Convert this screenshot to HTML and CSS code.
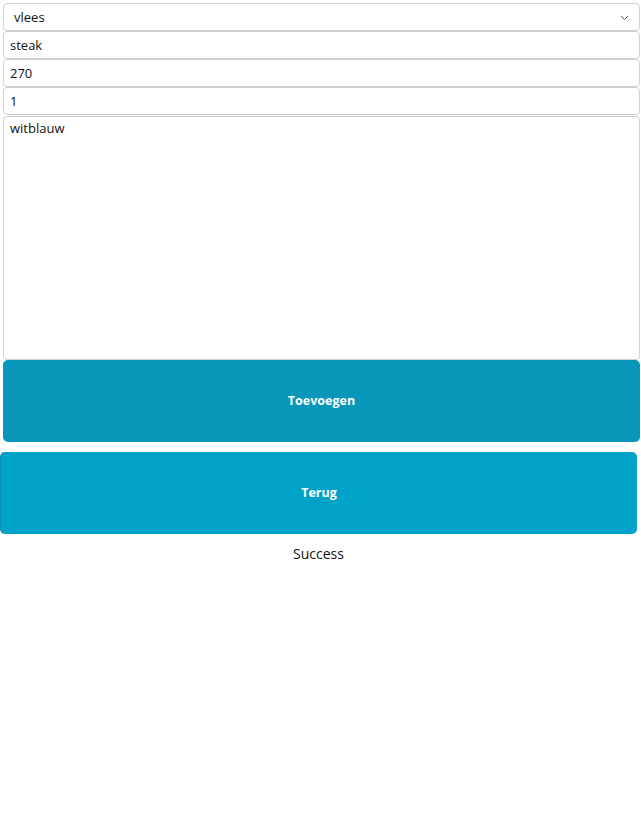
FILE: index.html
```html
<!DOCTYPE html>
<html>
<head>
<meta charset="utf-8">
<link rel="stylesheet" href="styles.css">
</head>
<body>
<div class="page">
  <form class="form">
    <div class="select">
      <span class="select-value">vlees</span>
      <svg class="chevron" width="9" height="6" viewBox="0 0 9 6"><path d="M1 1l3.5 3.5L8 1" fill="none" stroke="#555" stroke-width="1"/></svg>
    </div>
    <input class="field" type="text" value="steak">
    <input class="field" type="text" value="270">
    <input class="field" type="text" value="1">
    <textarea class="area">witblauw</textarea>
    <button type="button" class="btn btn-add">Toevoegen</button>
  </form>
  <button type="button" class="btn btn-back">Terug</button>
  <p class="status">Success</p>
</div>
</body>
</html>
```
FILE: styles.css
```css
html, body { margin: 0; padding: 0; background: #fff; }
body { font-family: "Open Sans", "Noto Sans", sans-serif; color: #111; }
.page { display: flex; flex-direction: column; width: 641px; }
.form { display: flex; flex-direction: column; padding: 3px 1px 0 3px; }
.select, .field, .area {
  box-sizing: border-box;
  width: 637px;
  border: 1px solid #d0d0d0;
  border-radius: 4px;
  background: #fff;
  font-family: inherit;
  font-size: 13px;
  color: #111;
  margin: 0;
}
.select { height: 28px; display: flex; align-items: center; justify-content: space-between; padding: 0 10px 0 10px; }
.chevron { margin-top: 2px; }
.field { height: 28px; padding: 0 6px 1px; outline: none; }
.area { height: 244px; padding: 2px 6px; resize: none; outline: none; margin-top: 1px; }
.btn {
  box-sizing: border-box;
  width: 637px;
  height: 82px;
  border: none;
  border-radius: 5px;
  color: #fff;
  font-family: inherit;
  font-weight: 700;
  font-size: 12.5px;
  margin: 0;
  padding: 0 0 1px;
}
.btn-add { background: #0897b9; }
.btn-back { background: #00a2c7; margin-top: 10px; border-left: 1px solid #0792b3; }
.status { margin: 10px 0 0; text-align: center; font-size: 14px; width: 637px; }
```
